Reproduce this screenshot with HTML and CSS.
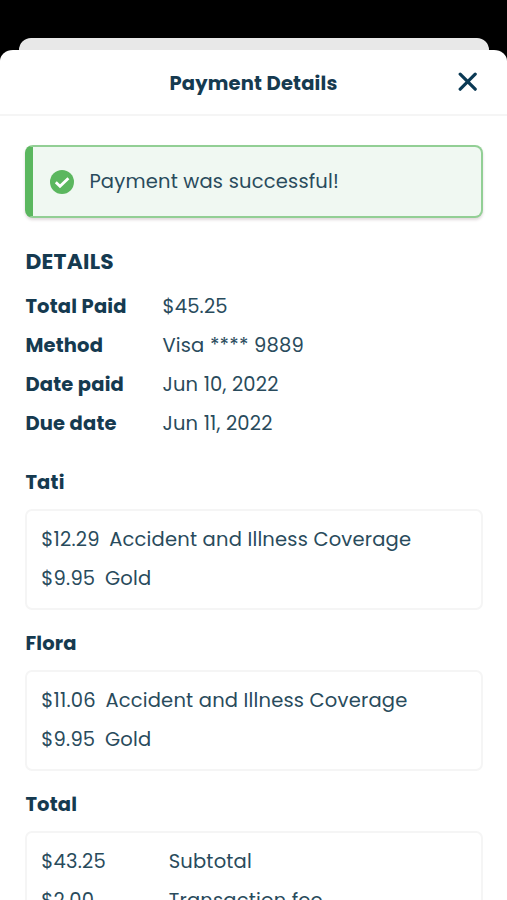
FILE: index.html
```html
<!DOCTYPE html>
<html lang="en">
<head>
<meta charset="utf-8">
<title>Payment Details</title>
<link rel="stylesheet" href="styles.css">
</head>
<body>
<div class="backdrop-sheet"></div>
<main class="sheet">
  <header class="header">
    <h1 class="title">Payment Details</h1>
    <button class="close" aria-label="Close">
      <svg width="20" height="20" viewBox="0 0 20 20"><path d="M2.2 2.2 17.2 17.2M17.2 2.2 2.2 17.2"/></svg>
    </button>
  </header>
  <div class="content">
    <div class="alert">
      <svg class="alert-icon" width="24" height="24" viewBox="0 0 24 24"><circle cx="12" cy="12" r="12"/><path d="M5.8 12.2 10 16.2 18.4 8.2"/></svg>
      <span>Payment was successful!</span>
    </div>
    <h2 class="heading">DETAILS</h2>
    <dl class="details">
      <dt>Total Paid</dt><dd>$45.25</dd>
      <dt>Method</dt><dd>Visa **** 9889</dd>
      <dt>Date paid</dt><dd>Jun 10, 2022</dd>
      <dt>Due date</dt><dd>Jun 11, 2022</dd>
    </dl>
    <section class="group">
      <h3>Tati</h3>
      <div class="card">
        <div class="line"><span>$12.29</span><span>Accident and Illness Coverage</span></div>
        <div class="line"><span>$9.95</span><span>Gold</span></div>
      </div>
    </section>
    <section class="group">
      <h3>Flora</h3>
      <div class="card">
        <div class="line"><span>$11.06</span><span>Accident and Illness Coverage</span></div>
        <div class="line"><span>$9.95</span><span>Gold</span></div>
      </div>
    </section>
    <section class="group">
      <h3>Total</h3>
      <div class="card">
        <div class="line totals"><span class="sum">$43.25</span><span>Subtotal</span></div>
        <div class="line totals"><span class="sum">$2.00</span><span>Transaction fee</span></div>
      </div>
    </section>
  </div>
</main>
</body>
</html>
```
FILE: styles.css
```css
* { box-sizing: border-box; }

body {
  height: 900px;
  margin: 0;
  padding-top: 38px;
  overflow: hidden;
  background: #000;
  color: #294b5c;
  font: 19.5px/39px Poppins, Inter, sans-serif;
  letter-spacing: 0.19px;
}

h1, h2, h3, dl, dd { margin: 0; }

.backdrop-sheet {
  height: 12px;
  margin: 0 18px 0 19px;
  border-radius: 12px 12px 0 0;
  background: #e8e8e8;
}

.sheet {
  height: 850px;
  overflow: hidden;
  border-radius: 13px 13px 0 0 / 11px 11px 0 0;
  background: #fff;
}

.header {
  display: grid;
  grid-template-columns: 1fr auto 1fr;
  align-items: center;
  height: 66px;
  border-bottom: 2px solid #f5f5f5;
}

.title {
  grid-column: 2;
  padding-top: 2px;
  color: #153a50;
  font-size: 19.5px;
  font-weight: 700;
}

.close {
  justify-self: end;
  display: flex;
  margin: 0 29px 0 0;
  padding: 0;
  border: 0;
  background: none;
}

.close path {
  fill: none;
  stroke: #0b3a55;
  stroke-width: 3.2;
  stroke-linecap: round;
}

.content { padding: 29px 24px 0 25px; }

.alert {
  display: flex;
  align-items: center;
  gap: 15.4px;
  height: 73px;
  padding-left: 17px;
  border: 2px solid #92cf95;
  border-left: 8px solid #5bb75f;
  border-radius: 8px;
  background: #f0f8f2;
  box-shadow: 0 2px 3px rgba(60, 20, 40, 0.16);
}

.alert-icon circle { fill: #5bb75f; }

.alert-icon path {
  fill: none;
  stroke: #fff;
  stroke-width: 2.8;
}

.heading {
  margin-top: 24px;
  padding-left: 0.4px;
  color: #153a50;
  font-size: 21.8px;
  font-weight: 700;
  line-height: 40px;
  letter-spacing: 0.25px;
}

.details {
  display: grid;
  grid-template-columns: 137px 1fr;
  grid-auto-rows: 39.15px;
  margin-top: 5px;
  padding-left: 0.4px;
}

.details dt {
  color: #153a50;
  font-weight: 700;
}

.group { height: 161.4px; }

.details + .group { margin-top: 19px; }

.group h3 {
  padding-left: 0.4px;
  color: #153a50;
  font-size: 19.5px;
}

.card {
  height: 101px;
  margin-top: 7px;
  padding: 9px 14.3px;
  border: 2px solid #f5f5f5;
  border-radius: 7px;
}

.line {
  display: flex;
  gap: 9.6px;
}

.totals { gap: 0; }

.sum { width: 127.4px; }
```
